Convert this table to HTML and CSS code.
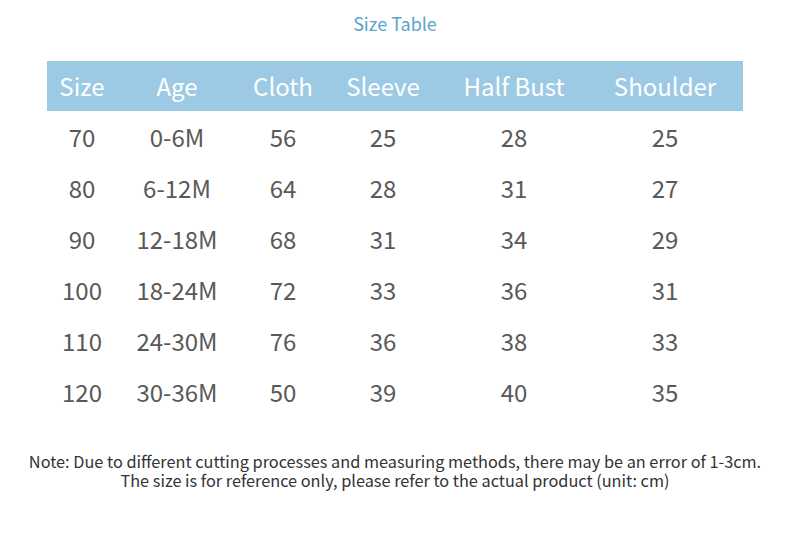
FILE: index.html
```html
<!DOCTYPE html>
<html>
<head>
<meta charset="utf-8">
<link rel="stylesheet" href="styles.css">
</head>
<body>
<div class="page">
  <div class="title">Size Table</div>
  <div class="table">
    <div class="row head">
      <div>Size</div><div>Age</div><div>Cloth</div><div>Sleeve</div><div>Half Bust</div><div>Shoulder</div>
    </div>
    <div class="row"><div>70</div><div>0-6M</div><div>56</div><div>25</div><div>28</div><div>25</div></div>
    <div class="row"><div>80</div><div>6-12M</div><div>64</div><div>28</div><div>31</div><div>27</div></div>
    <div class="row"><div>90</div><div>12-18M</div><div>68</div><div>31</div><div>34</div><div>29</div></div>
    <div class="row"><div>100</div><div>18-24M</div><div>72</div><div>33</div><div>36</div><div>31</div></div>
    <div class="row"><div>110</div><div>24-30M</div><div>76</div><div>36</div><div>38</div><div>33</div></div>
    <div class="row"><div>120</div><div>30-36M</div><div>50</div><div>39</div><div>40</div><div>35</div></div>
  </div>
  <div class="note">
    <div class="line">Note: Due to different cutting processes and measuring methods, there may be an error of 1-3cm.</div>
    <div class="line">The size is for reference only, please refer to the actual product (unit: cm)</div>
  </div>
</div>
</body>
</html>
```
FILE: styles.css
```css
html, body {
  margin: 0;
  padding: 0;
  background: #ffffff;
}
body {
  font-family: "Noto Sans CJK SC", "Noto Sans", sans-serif;
  width: 790px;
  height: 542px;
  overflow: hidden;
}
.page {
  display: flex;
  flex-direction: column;
  align-items: center;
}
.title {
  margin-top: 10px;
  height: 26px;
  line-height: 26px;
  font-size: 18px;
  color: #5ba4cf;
}
.table {
  margin-top: 25px;
  width: 696px;
}
.row {
  display: grid;
  grid-template-columns: 70px 120px 92px 108px 154px 148px;
  height: 51px;
  align-items: center;
  font-size: 24px;
  color: #595959;
}
.row > div {
  text-align: center;
  padding-bottom: 2px;
}
.head {
  height: 50px;
  background: #9ccae4;
  color: #ffffff;
  margin-bottom: 1px;
}
.note {
  margin-top: 34px;
  font-size: 16.3px;
  color: #333333;
  text-align: center;
}
.line {
  height: 19px;
  line-height: 19px;
}
```
